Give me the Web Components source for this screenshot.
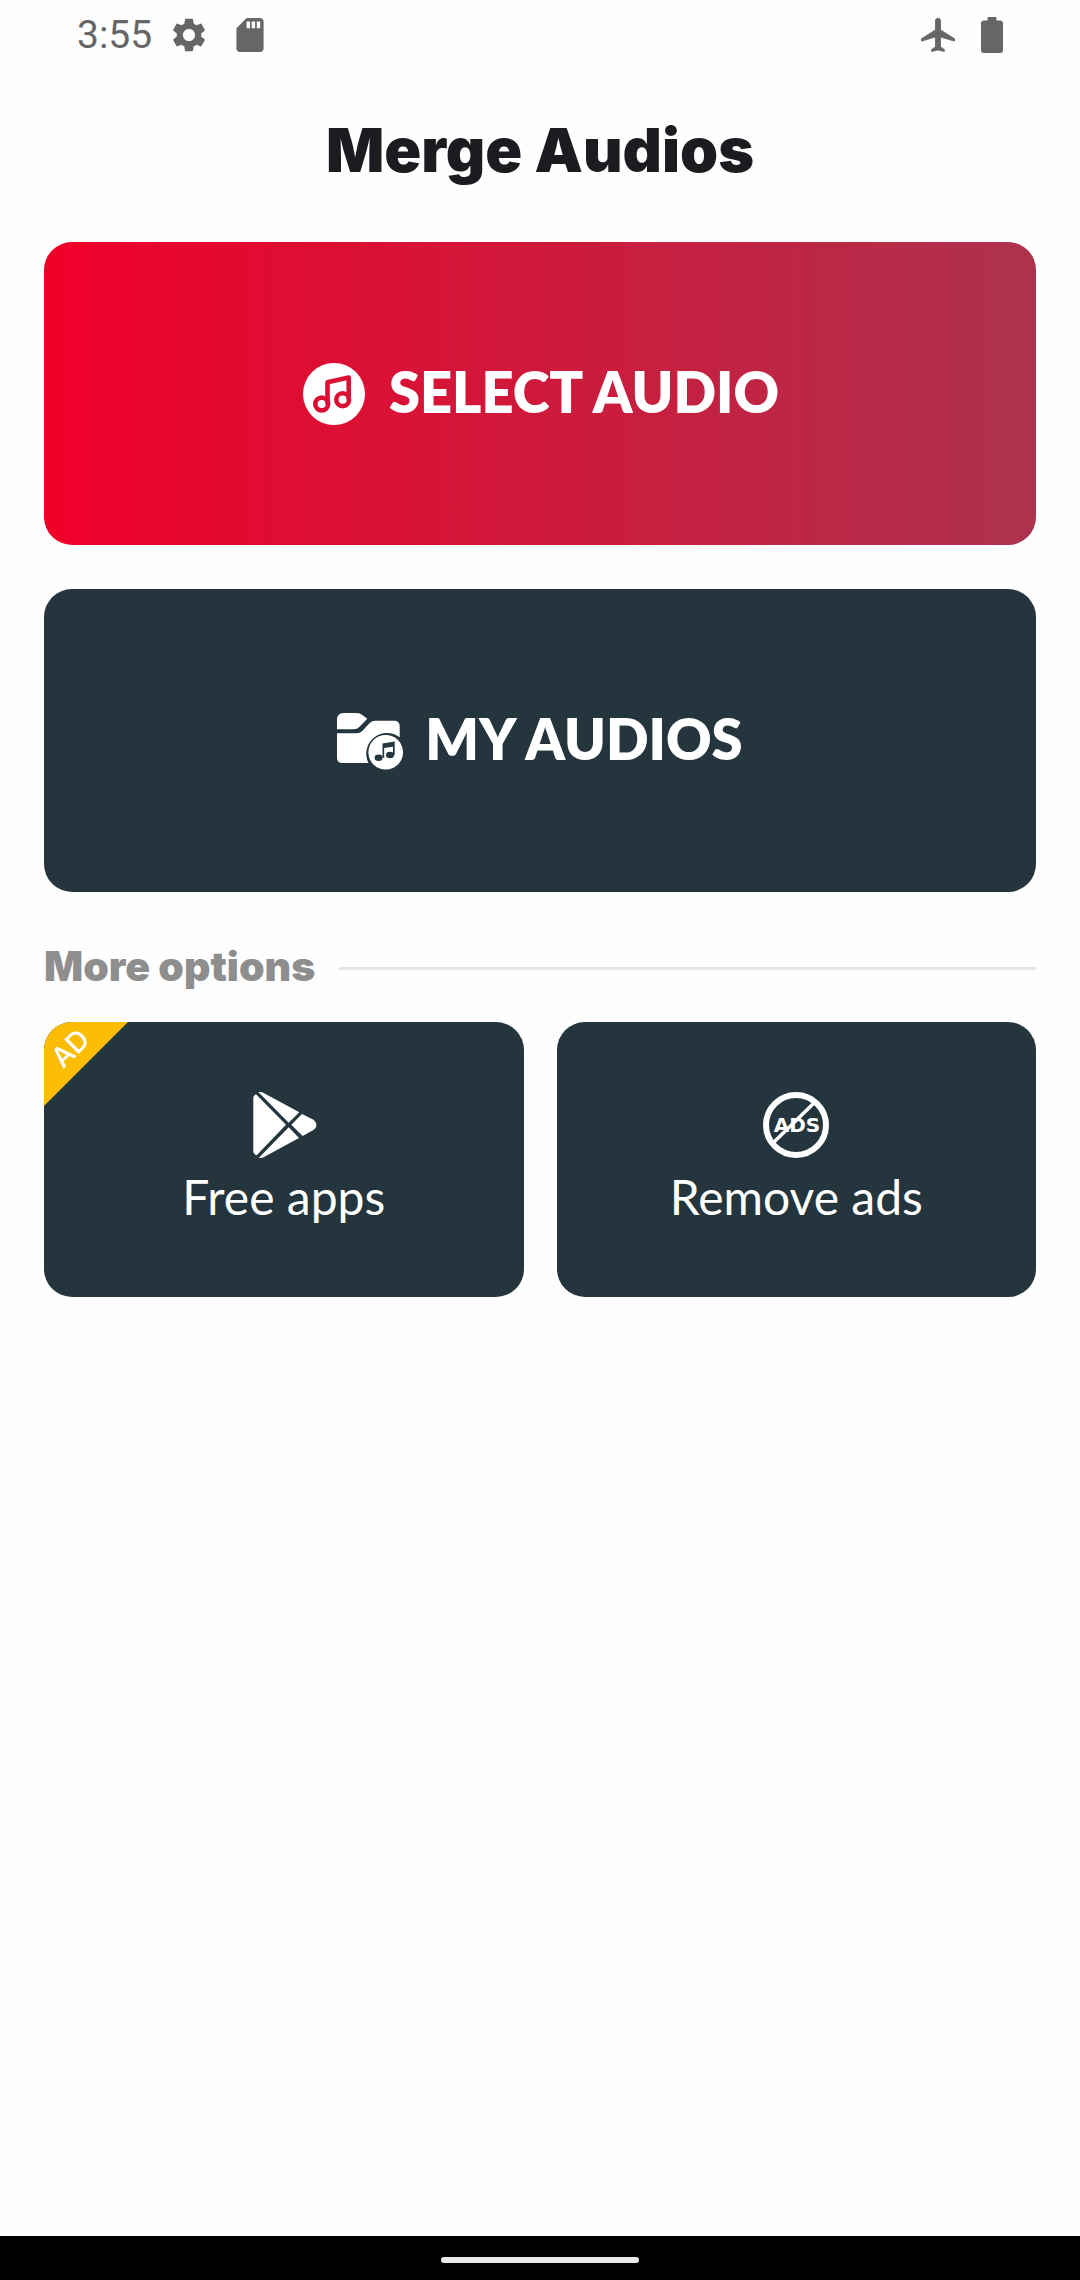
<!DOCTYPE html>
<html lang="en">
<head>
<meta charset="utf-8">
<meta name="viewport" content="width=device-width, initial-scale=1">
<title>Merge Audios</title>
<style>
body { margin: 0; background: #fefefe; font-family: Lato, "Open Sans", sans-serif; }
</style>
</head>
<body>
<merge-app></merge-app>
<script>
const ICONS = {
  gear: '<svg viewBox="2 2 20 20" width="34" height="34"><path fill="currentColor" d="M19.14 12.94c.04-.3.06-.61.06-.94 0-.32-.02-.64-.07-.94l2.03-1.58c.18-.14.23-.41.12-.61l-1.92-3.32c-.12-.22-.37-.29-.59-.22l-2.39.96c-.5-.38-1.03-.7-1.62-.94l-.36-2.54c-.04-.24-.24-.41-.48-.41h-3.84c-.24 0-.43.17-.47.41l-.36 2.54c-.59.24-1.13.57-1.62.94l-2.39-.96c-.22-.08-.47 0-.59.22L2.74 8.87c-.12.21-.08.47.12.61l2.03 1.58c-.05.3-.09.63-.09.94s.02.64.07.94l-2.03 1.58c-.18.14-.23.41-.12.61l1.92 3.32c.12.22.37.29.59.22l2.39-.96c.5.38 1.03.7 1.62.94l.36 2.54c.05.24.24.41.48.41h3.84c.24 0 .44-.17.47-.41l.36-2.54c.59-.24 1.13-.56 1.62-.94l2.39.96c.22.08.47 0 .59-.22l1.92-3.32c.12-.22.07-.47-.12-.61l-2.01-1.58zM12 15.6c-1.98 0-3.6-1.62-3.6-3.6s1.62-3.6 3.6-3.6 3.6 1.62 3.6 3.6-1.62 3.6-3.6 3.6z"/></svg>',
  sd: '<svg viewBox="4 2 16 20" width="28" height="34"><path fill="currentColor" d="M18 2h-8L4.02 8 4 20c0 1.100.9 2 2 2h12c1.100 0 2-.9 2-2V4c0-1.100-.9-2-2-2zm-6 6h-2V4h2v4zm3 0h-2V4h2v4zm3 0h-2V4h2v4z"/></svg>',
  plane: '<svg viewBox="2 2 20 20" width="34" height="36"><path fill="currentColor" stroke="currentColor" stroke-width=".5" stroke-linejoin="round" d="M21.700 15.600v-1.400l-8.200-5.200V3.500c0-.83-.67-1.300-1.500-1.300s-1.500.47-1.500 1.300V9l-8.200 5.200v1.400l8.200-2.400V19L8.300 20.500v1.200l3.700-.9 3.700.9v-1.200L13.500 19v-5.800z"/></svg>',
  battery: '<svg viewBox="7 2 10 20" preserveAspectRatio="none" width="22" height="36"><path fill="currentColor" d="M15.670 4H14V2h-4v2H8.330C7.600 4 7 4.600 7 5.330v15.330C7 21.400 7.600 22 8.330 22h7.330c.74 0 1.340-.6 1.340-1.330V5.330C17 4.600 16.400 4 15.670 4z"/></svg>',
  music: '<svg viewBox="0 0 66 66" width="66" height="66"><mask id="m"><circle cx="33" cy="33" r="31" fill="#fff"/><g fill="none" stroke="#000" stroke-width="4.600" stroke-linejoin="round"><circle cx="20.700" cy="43" r="6.400"/><circle cx="41.700" cy="38.700" r="6.400"/><path d="M26.500 43V21.200l21.200-4.600v22.100"/></g></mask><rect width="66" height="66" fill="currentColor" mask="url(#m)"/></svg>',
  folder: '<svg viewBox="0 0 66 66" width="66" height="66"><g fill="currentColor"><path d="M0 21.300V11a6 6 0 0 1 6-6h14q3 0 5 1.700l5.300 4-8 8.300q-2.200 2.300-5.300 2.300z"/><path d="M0 25.300h19.500q3.400 0 5.800-2.400l7.400-7.800q2.300-2.400 5.600-2.400H57q5.700 0 5.700 5.600v11A20.700 20.700 0 0 0 31.500 55H5.500Q0 55 0 49.500z"/><circle cx="48.700" cy="44.300" r="17.300"/></g><g fill="#25353e"><ellipse cx="41.600" cy="49.800" rx="4" ry="3.200"/><ellipse cx="53" cy="47" rx="4" ry="3.200"/><path d="M45.500 35.400l12.200-1.900V47H56v-8.300l-8.800 1.400v9.700h-1.700z"/></g></svg>',
  play: '<svg viewBox="0 0 66 66" width="66" height="66"><g fill="currentColor"><path d="M2.300 5.500Q2.500 3.500 5 2.300L35 32.700 5.700 63.300Q2.300 62 2.300 59.500z"/><path d="M7.300 0q2.700-.3 5.400 1l35.600 19.300-10.600 10.400z"/><path d="M51 22l10.500 5.300q3.900 2.500 3.900 5.700t-3.900 5.500L51.700 44 40.300 32.800z"/><path d="M37.700 35.200L48 46 13 65q-2.700 1.300-5.300 1z"/></g></svg>',
  noads: '<svg viewBox="0 0 66 66" width="66" height="66"><circle cx="33" cy="33" r="30" fill="none" stroke="currentColor" stroke-width="6"/><text x="34" y="40" text-anchor="middle" font-family="DejaVu Sans" font-weight="700" font-size="20" fill="currentColor">ADS</text><path d="M10.500 50.500L51.500 10.500" stroke="currentColor" stroke-width="3.500"/></svg>'
};

function define(name, html) {
  customElements.define(name, class extends HTMLElement {
    constructor() {
      super();
      this.attachShadow({ mode: 'open' }).innerHTML = html;
    }
  });
}

customElements.define('app-icon', class extends HTMLElement {
  connectedCallback() {
    const root = this.shadowRoot || this.attachShadow({ mode: 'open' });
    root.innerHTML = '<style>:host{display:block;flex:none}svg{display:block}</style>' + ICONS[this.getAttribute('name')];
  }
});

define('status-bar', `
<style>
:host { display: flex; align-items: center; justify-content: space-between; height: 70px; padding: 0 77px; color: #666; font: 400 39px/72px Roboto, sans-serif; }
div { display: flex; align-items: center; }
.left { gap: 20px; }
.left app-icon + app-icon { margin-left: 10px; }
.right { gap: 26px; }
</style>
<div class="left"><span>3:55</span><app-icon name="gear"></app-icon><app-icon name="sd"></app-icon></div>
<div class="right"><app-icon name="plane"></app-icon><app-icon name="battery"></app-icon></div>`);

define('action-card', `
<style>
:host { display: block; }
button { box-sizing: border-box; width: 100%; height: 303px; border: 0; border-radius: 28px; padding: 0; display: flex; align-items: center; justify-content: center; gap: 22px; background: #25353e; color: #fff; font: 800 56px/64px Lato, sans-serif; cursor: pointer; }
span { padding-bottom: 4px; }
:host([primary]) button { background: linear-gradient(90deg, #f00029, #ad324e); }
</style>
<button type="button"><slot name="icon"></slot><span><slot></slot></span></button>`);

define('option-tile', `
<style>
:host { display: block; flex: 1; min-width: 0; }
button { position: relative; overflow: hidden; width: 100%; height: 275px; border: 0; border-radius: 28px; padding: 0; display: flex; flex-direction: column; align-items: center; justify-content: center; gap: 8px; background: #25353e; color: #fff; font: 400 48px/62px Lato, sans-serif; cursor: pointer; }
</style>
<button type="button"><slot name="icon"></slot><slot></slot><slot name="ribbon"></slot></button>`);

define('ad-ribbon', `
<style>
:host { position: absolute; left: 0; top: 0; width: 84px; height: 84px; background: #fbbc04; clip-path: polygon(0 0, 100% 0, 0 100%); color: #fff; font: 500 28px/52px Inter, sans-serif; }
span { display: block; width: 54px; height: 54px; text-align: center; transform: rotate(-45deg); }
</style>
<span><slot></slot></span>`);

define('section-heading', `
<style>
:host { display: flex; align-items: center; gap: 24px; }
h2 { margin: 0; color: #8e8e8e; font: 900 41px/56px Inter, sans-serif; }
i { flex: 1; height: 3px; margin-top: 4px; background: #e6e6e6; }
</style>
<h2><slot></slot></h2><i></i>`);

define('nav-bar', `
<style>
:host { display: flex; align-items: center; justify-content: center; height: 44px; margin-top: auto; background: #000; padding-top: 4px; box-sizing: border-box; }
i { width: 198px; height: 6px; border-radius: 3px; background: #ebebeb; }
</style><i></i>`);

define('merge-app', `
<style>
:host { display: flex; flex-direction: column; min-height: 100vh; }
h1 { margin: 0; color: #1c1b1f; font: 900 61px/80px Inter, sans-serif; text-align: center; padding: 40px 0 52px; }
main { display: flex; flex-direction: column; padding: 0 44px; }
action-card + action-card { margin-top: 44px; }
section-heading { margin: 46px 0 28px; }
.row { display: flex; gap: 33px; }
</style>
<status-bar></status-bar>
<h1>Merge Audios</h1>
<main>
<action-card primary><app-icon slot="icon" name="music"></app-icon>SELECT AUDIO</action-card>
<action-card><app-icon slot="icon" name="folder"></app-icon>MY AUDIOS</action-card>
<section-heading>More options</section-heading>
<div class="row">
<option-tile><app-icon slot="icon" name="play"></app-icon>Free apps<ad-ribbon slot="ribbon">AD</ad-ribbon></option-tile>
<option-tile><app-icon slot="icon" name="noads"></app-icon>Remove ads</option-tile>
</div>
</main>
<nav-bar></nav-bar>`);
</script>
</body>
</html>
